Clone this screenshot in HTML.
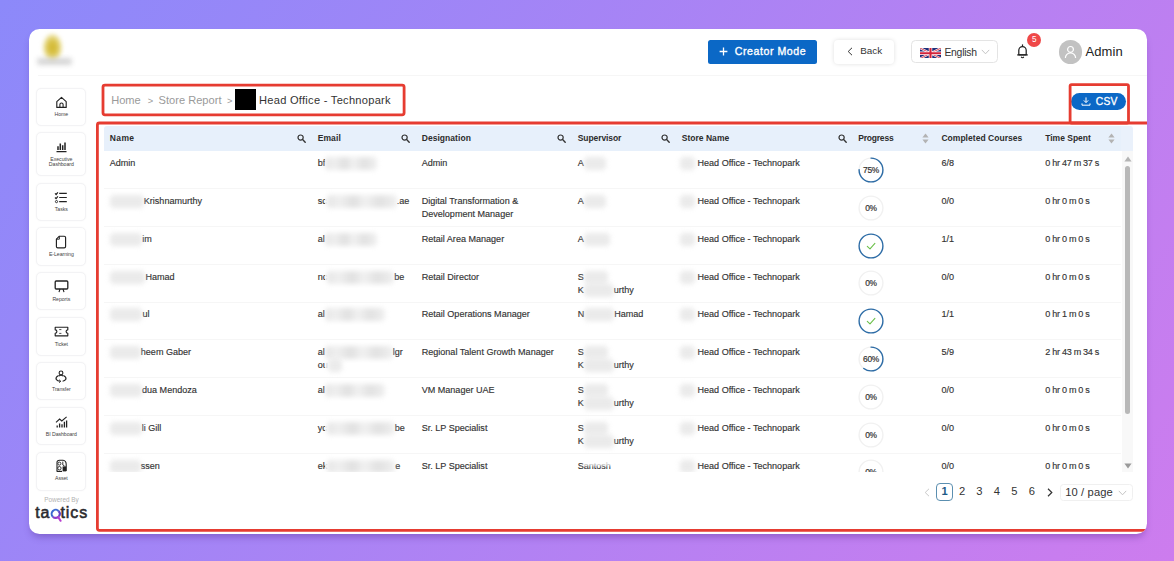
<!DOCTYPE html>
<html lang="en"><head><meta charset="utf-8"><title>Store Report - Head Office - Technopark</title>
<style>
*{box-sizing:border-box;margin:0;padding:0}
html,body{width:1174px;height:561px;overflow:hidden}
body{font-family:"Liberation Sans",Arial,sans-serif;color:#333;background:linear-gradient(125deg,#8c89fa,#cd7cee);position:relative}
.card{position:absolute;left:29.4px;top:28.7px;width:1117.3px;height:504.9px;background:#fff;border-radius:10.5px;box-shadow:0 5px 7px -2px rgba(70,30,130,.35);overflow:hidden}
.abs{position:absolute}
/* everything inside card is positioned in page coords via .pg0 wrapper */
.pg0{position:absolute;left:-29.4px;top:-28.7px;width:1174px;height:561px}
.hline{position:absolute;left:38px;top:74.5px;width:1110px;height:1px;background:#f6f6f6}
.logo{position:absolute;left:43.2px;top:34px;width:19px;height:27px;border-radius:50%;background:radial-gradient(ellipse at center,#d1b52c 0%,#d9c34a 35%,#e9dd92 60%,rgba(245,240,200,0) 85%);filter:blur(1.9px)}
.logot{position:absolute;left:37px;top:57.5px;width:35px;height:7.5px;border-radius:3px;background:#cfcfcf;filter:blur(2.6px);opacity:.85}
.btn-c{position:absolute;left:707.5px;top:40.4px;width:109px;height:23.2px;background:#0b68c6;border-radius:2.5px;color:#fff;font-weight:400;-webkit-text-stroke:.35px #fff;font-size:10.6px;line-height:23.2px;letter-spacing:.55px}
.btn-c span{position:absolute;left:27.3px;top:-.4px;white-space:nowrap}
.btn-c svg{position:absolute;left:11.8px;top:6.7px}
.btn-b{position:absolute;left:834px;top:39.8px;width:59.6px;height:24.2px;background:#fff;border-radius:4px;box-shadow:0 0 4px rgba(0,0,0,.13);font-size:9.9px;line-height:24px;color:#333}
.btn-b span{position:absolute;left:26.2px;top:-.6px}
.btn-b svg{position:absolute;left:12.6px;top:7.4px}
.lang{position:absolute;left:911px;top:40.4px;width:86.5px;height:22.8px;border:1px solid #e4e4e4;border-radius:4.5px;background:#fff;font-size:10.4px;line-height:20.8px;color:#333}
.lang span{position:absolute;left:32.4px;top:1.4px;letter-spacing:-.25px}
.lang .fl{position:absolute;left:7.6px;top:6.4px}
.lang .ch{position:absolute;left:69.2px;top:8px}
.bell{position:absolute;left:1015.6px;top:44.2px}
.badge{position:absolute;left:1027.1px;top:32.6px;width:14.4px;height:14.4px;border-radius:50%;background:#ef4848;color:#fff;font-size:8.2px;line-height:14.4px;text-align:center}
.av{position:absolute;left:1058.8px;top:40.2px;width:23.4px;height:23.4px;border-radius:50%;background:#c2c2c2}
.av svg{position:absolute;left:5.2px;top:4.6px}
.adm{position:absolute;left:1085.6px;top:44px;font-size:13px;line-height:15px;color:#222;letter-spacing:.05px}
.sb{position:absolute;left:36.4px;width:49.9px;background:#fff;border:1px solid #f3f3f5;border-radius:5px;box-shadow:0 0 2px rgba(0,0,0,.04);text-align:center}
.sb .ic{position:absolute;left:0;right:0;top:6px;height:15px;display:flex;align-items:center;justify-content:center}
.sb .lb{position:absolute;left:-10px;right:-10px;top:23.6px;font-size:5.2px;line-height:5.4px;color:#444;letter-spacing:-.05px}
.pw{position:absolute;left:36px;top:496.4px;width:51px;text-align:center;font-size:6.4px;line-height:8px;color:#b2b2b2}
.tq{position:absolute;left:35.2px;top:503.9px;font-weight:400;-webkit-text-stroke:.55px #2a2a2e;font-size:16px;line-height:18px;color:#2a2a2e;letter-spacing:.98px}
.tq .q{color:transparent;-webkit-text-stroke:0 transparent}
.tqs{position:absolute;left:50.4px;top:507.6px}
.red{position:absolute;border:2.7px solid #e8403a;border-radius:3px}
.bc{position:absolute;top:94px;font-size:11.1px;line-height:13px;white-space:nowrap}
.bc.g{color:#9a9a9a}
.blk{position:absolute;left:234.8px;top:89.4px;width:21px;height:20.5px;background:#000}
.csv{position:absolute;left:1071px;top:93.2px;width:55px;height:17px;border-radius:9px;background:#0b68c6;color:#fff;font-weight:400;-webkit-text-stroke:.3px #fff;font-size:10.3px;line-height:17px;letter-spacing:.2px}
.csv span{position:absolute;left:24.8px;top:0}
.csv svg{position:absolute;left:10.4px;top:4px}
.thead{position:absolute;left:104px;top:126.4px;width:1016.5px;height:24.6px;background:#e7f0fb;border-radius:3px 0 0 0}
.sgut{position:absolute;left:1120.5px;top:126.4px;width:12px;height:24.6px;background:#eaf1fb;border-radius:0 3px 0 0}
.th{position:absolute;top:0;height:24.6px;font-weight:700;font-size:8.5px;line-height:24.2px;color:#2c2c2c;white-space:nowrap}
.th span{position:absolute;left:5.7px;top:0}
.th .si{position:absolute;right:5.9px;top:7.4px}
.th .so{position:absolute;right:7.2px;top:6.8px}
.c1{left:0;width:208px}.c2{left:208px;width:104px}.c3{left:312px;width:156px}.c4{left:468px;width:104px}
.c5{left:572px;width:176.5px}.c6{left:748.5px;width:83.2px}.c7{left:831.7px;width:103.8px}.c8{left:935.5px;width:81px}
.td.c8{letter-spacing:-.28px}
.th.c8 .so{right:5.4px}
.tbody{position:absolute;left:104px;top:151px;width:1016.5px;height:320.8px;overflow:hidden}
.tr{position:absolute;left:0;width:1016.5px;height:37.8px;border-bottom:1px solid #f6f6f6}
.td{position:absolute;top:0;padding:5.8px 0 0 5.7px;font-size:9.05px;line-height:13.1px;color:#333;-webkit-text-stroke:.15px #333;white-space:nowrap}
.td span{vertical-align:top}
.bl{display:inline-block;height:13px;background:#dedede;border-radius:4px;filter:blur(2.4px);vertical-align:top;margin-top:0;opacity:.62}
.bt{background:linear-gradient(90deg,#d6d6d6,#e6e6e6 18%,#cecece 38%,#e9e9e9 55%,#d0d0d0 75%,#e6e6e6)}
.cut{position:absolute;left:12.5px;top:6px;width:3.4px;height:11px;background:linear-gradient(90deg,rgba(255,255,255,.9),rgba(255,255,255,.7))}
.td.c6{padding:0}
.pc{position:absolute;left:5.4px;top:5.6px}
.pt{font-family:"Liberation Sans",Arial,sans-serif;font-size:8.4px;fill:#333;font-weight:400;letter-spacing:-.25px;stroke:#333;stroke-width:.2px}
.strack{position:absolute;left:1122.4px;top:151px;width:10.2px;height:321px;background:#f8f8f8}
.sthumb{position:absolute;left:1125.2px;top:166px;width:5.2px;height:248px;background:#b8b8b8;border-radius:3px}
.pgn{position:absolute;top:484px;font-size:11.2px;line-height:16.4px;color:#333}
.pg{position:absolute;top:483.4px;width:17.3px;height:18px;font-size:11.2px;line-height:17.8px;text-align:center;color:#333;border-radius:3px}
.pg.on{border:1px solid #5b8fb0;line-height:15.8px;color:#1d5a86;font-weight:700;border-radius:4px}
.psel{position:absolute;left:1060px;top:484px;width:72.6px;height:17px;border:1px solid #f0f0f0;border-radius:3.5px;font-size:11.2px;line-height:15px}
.psel span{position:absolute;left:4.2px;top:-.2px;white-space:nowrap;letter-spacing:.12px}
.psel svg{position:absolute;left:57.4px;top:5.2px}
</style></head><body>
<div class="card"><div class="pg0">
<div class="logo"></div><div class="logot"></div>
<div class="btn-c"><svg width="9" height="9" viewBox="0 0 9 9"><path d="M4.5 .6 V8.4 M.6 4.5 H8.4" stroke="#fff" stroke-width="1.3"/></svg><span>Creator Mode</span></div>
<div class="btn-b"><svg width="6" height="9" viewBox="0 0 6 9"><path d="M5 .8 L1.2 4.5 L5 8.2" fill="none" stroke="#333" stroke-width="1"/></svg><span>Back</span></div>
<div class="lang"><svg class="fl" width="21" height="10.6" viewBox="0 0 60 30" preserveAspectRatio="none"><rect width="60" height="30" fill="#1f2f7a"/><path d="M0 0 L60 30 M60 0 L0 30" stroke="#fff" stroke-width="6"/><path d="M0 0 L60 30 M60 0 L0 30" stroke="#d3223a" stroke-width="2.4"/><path d="M30 0 V30 M0 15 H60" stroke="#fff" stroke-width="10"/><path d="M30 0 V30 M0 15 H60" stroke="#d3223a" stroke-width="6"/></svg><span>English</span><svg class="ch" width="9" height="6" viewBox="0 0 9 6"><path d="M.8 .9 L4.5 4.8 L8.2 .9" fill="none" stroke="#c4c4c4" stroke-width="1"/></svg></div>
<svg class="bell" width="13" height="15" viewBox="0 0 13 15"><path d="M2.8 10.8 V6.3 a3.7 3.7 0 0 1 7.4 0 V10.8 Z" fill="none" stroke="#222" stroke-width="1.25" stroke-linejoin="round"/><path d="M1.7 10.9 H11.3" stroke="#222" stroke-width="1.25" stroke-linecap="round"/><path d="M5.2 12.8 a1.4 1.4 0 0 0 2.6 0" fill="none" stroke="#222" stroke-width="1.1"/><path d="M6.5 .8 V2.2" stroke="#222" stroke-width="1.2" stroke-linecap="round"/></svg>
<div class="badge">5</div>
<div class="av"><svg width="13" height="14" viewBox="0 0 13 14"><circle cx="6.5" cy="4.4" r="2.9" fill="none" stroke="#fff" stroke-width="1.2"/><path d="M1.4 13 a5.1 5.1 0 0 1 10.2 0" fill="none" stroke="#fff" stroke-width="1.2"/></svg></div>
<div class="adm">Admin</div>
<div class="hline"></div>
<div class="sb" style="top:87.5px;height:38px"><div class="ic"><svg width="13" height="13" viewBox="0 0 13 13"><path d="M1.8 5.6 L6.5 1.4 L11.2 5.6 V11.4 H1.8 Z" fill="none" stroke="#222" stroke-width="1.15" stroke-linejoin="round"/><path d="M4.9 11.4 V8.6 a1.6 1.6 0 0 1 3.2 0 V11.4" fill="none" stroke="#222" stroke-width="1.1"/></svg></div><div class="lb">Home</div></div><div class="sb" style="top:132.2px;height:44.1px"><div class="ic"><svg width="13" height="13" viewBox="0 0 13 13"><path d="M1.5 11.6 H11.5" stroke="#222" stroke-width="1.1"/><path d="M3 10 V6.2 M5.3 10 V3.6 M7.7 10 V5.2 M10 10 V2.4" stroke="#222" stroke-width="1.5"/></svg></div><div class="lb">Executive<br>Dashboard</div></div><div class="sb" style="top:182.5px;height:38.3px"><div class="ic"><svg width="14" height="13" viewBox="0 0 14 13"><path d="M5.2 2.4 H12.8 M5.2 6.5 H12.8 M5.2 10.6 H12.8" stroke="#222" stroke-width="1.2"/><path d="M1 2.4 l1.1 1.1 l1.8 -2.2 M1 6.5 l1.1 1.1 l1.8 -2.2" fill="none" stroke="#222" stroke-width="1.2"/><circle cx="2.5" cy="10.6" r="1.1" fill="none" stroke="#222" stroke-width="0.9"/></svg></div><div class="lb">Tasks</div></div><div class="sb" style="top:227.4px;height:38.2px"><div class="ic"><svg width="12" height="14" viewBox="0 0 12 14"><path d="M4.4 1.2 H9.2 a1.4 1.4 0 0 1 1.4 1.4 V11.4 a1.4 1.4 0 0 1 -1.4 1.4 H2.8 a1.4 1.4 0 0 1 -1.4 -1.4 V4.2 Z" fill="none" stroke="#222" stroke-width="1.15" stroke-linejoin="round"/><path d="M4.4 1.2 V4.2 H1.4" fill="none" stroke="#222" stroke-width="0.9"/></svg></div><div class="lb">E-Learning</div></div><div class="sb" style="top:272.1px;height:38.4px"><div class="ic"><svg width="15" height="13" viewBox="0 0 15 13"><rect x="1.2" y="1" width="12.6" height="8" rx="1" fill="none" stroke="#222" stroke-width="1.3"/><path d="M6 9 L5 12.2 M9 9 L10 12.2" stroke="#222" stroke-width="1.1"/></svg></div><div class="lb">Reports</div></div><div class="sb" style="top:317.2px;height:38.4px"><div class="ic"><svg width="15" height="11" viewBox="0 0 15 11"><path d="M1.2 1.2 H13.8 V3.8 a1.7 1.7 0 0 0 0 3.4 V9.8 H1.2 V7.2 a1.7 1.7 0 0 0 0 -3.4 Z" fill="none" stroke="#222" stroke-width="1.15" stroke-linejoin="round"/><path d="M5.2 3.6 H7.4 M5.2 7.4 H7.4" stroke="#222" stroke-width="0.8"/></svg></div><div class="lb">Ticket</div></div><div class="sb" style="top:362.1px;height:38.4px"><div class="ic"><svg width="14" height="13" viewBox="0 0 14 13"><circle cx="7" cy="2.9" r="1.9" fill="none" stroke="#222" stroke-width="1.1"/><path d="M4.6 5.6 Q1.2 7.4 2.2 9.4 Q3.4 11.2 6.2 11.3 M9.4 5.6 Q12.8 7.4 11.8 9.4 Q10.8 10.9 8.6 11.2" fill="none" stroke="#222" stroke-width="1.1"/><path d="M5.2 9.8 L6.8 11.3 L5.2 12.6" fill="none" stroke="#222" stroke-width="1"/><path d="M4.8 6 Q7 4.6 9.2 6" fill="none" stroke="#222" stroke-width="1.1"/></svg></div><div class="lb">Transfer</div></div><div class="sb" style="top:407px;height:38.3px"><div class="ic"><svg width="13" height="12" viewBox="0 0 13 12"><path d="M1 6.4 L4.6 3 L6.8 5 L11.6 0.9" fill="none" stroke="#222" stroke-width="1.1"/><path d="M2.2 11.4 V9.6 M4.6 11.4 V7.4 M7 11.4 V8.2 M9.4 11.4 V5.8 M11.6 11.4 V4.4" stroke="#222" stroke-width="1.3"/></svg></div><div class="lb">BI Dashboard</div></div><div class="sb" style="top:451.9px;height:38.9px"><div class="ic"><svg width="13" height="14" viewBox="0 0 13 14"><path d="M2 12 V3.4 Q2 1.2 4.6 1.2 H8 Q11.2 1.6 11.2 5.4 V12" fill="none" stroke="#222" stroke-width="1.1"/><circle cx="4.4" cy="4.6" r="1.5" fill="none" stroke="#222" stroke-width="0.9"/><circle cx="4.4" cy="9.2" r="1.7" fill="none" stroke="#222" stroke-width="0.9"/><rect x="7.6" y="7.4" width="3.6" height="5" fill="#222"/><path d="M7.8 2.6 V6 L9.6 7" fill="none" stroke="#222" stroke-width="0.9"/><path d="M1.6 12.4 H7" stroke="#222" stroke-width="1.2"/></svg></div><div class="lb">Asset</div></div>
<div class="pw">Powered By</div>
<div class="tq">ta<span class="q">q</span>tics</div>
<svg class="tqs" width="13.2" height="14.3" viewBox="0 0 12 13" fill="none" stroke-width="1.9"><path d="M2.58 7.92 A3.7 3.7 0 0 1 7.82 2.68" stroke="#3a68cf"/><path d="M7.82 2.68 A3.7 3.7 0 0 1 8.1 7.6" stroke="#6244c6"/><path d="M8.1 7.6 A3.7 3.7 0 0 1 2.58 7.92" stroke="#8a3fca"/><path d="M7.6 8.4 L9.6 11.6" stroke="#b83ccf" stroke-linecap="round"/></svg>

<div class="bc g" style="left:111.2px">Home</div><div class="bc g" style="left:147.8px;font-size:9.4px;top:94.3px">&gt;</div><div class="bc g" style="left:158.6px">Store Report</div><div class="bc g" style="left:226.9px;font-size:9.4px;top:94.3px">&gt;</div>
<div class="blk"></div>
<div class="bc" style="left:259px;color:#333;letter-spacing:.27px">Head Office - Technopark</div>

<div class="csv"><svg width="10" height="9" viewBox="0 0 10 9"><path d="M5 .4 V5.4 M2.8 3.4 L5 5.6 L7.2 3.4" fill="none" stroke="#fff" stroke-width="1"/><path d="M1 6.4 V8.2 H9 V6.4" fill="none" stroke="#fff" stroke-width="1"/></svg><span>CSV</span></div>

<div class="thead"><div class="th c1"><span style="letter-spacing:0.42px">Name</span><svg class="si" width="9" height="9" viewBox="0 0 9 9"><circle cx="3.6" cy="3.6" r="2.6" fill="none" stroke="#333" stroke-width="1.2"/><path d="M5.6 5.6 L8.2 8.2" stroke="#333" stroke-width="1.4" stroke-linecap="round"/></svg></div><div class="th c2"><span style="letter-spacing:0.1px">Email</span><svg class="si" width="9" height="9" viewBox="0 0 9 9"><circle cx="3.6" cy="3.6" r="2.6" fill="none" stroke="#333" stroke-width="1.2"/><path d="M5.6 5.6 L8.2 8.2" stroke="#333" stroke-width="1.4" stroke-linecap="round"/></svg></div><div class="th c3"><span style="letter-spacing:0.05px">Designation</span><svg class="si" width="9" height="9" viewBox="0 0 9 9"><circle cx="3.6" cy="3.6" r="2.6" fill="none" stroke="#333" stroke-width="1.2"/><path d="M5.6 5.6 L8.2 8.2" stroke="#333" stroke-width="1.4" stroke-linecap="round"/></svg></div><div class="th c4"><span style="letter-spacing:-0.08px">Supervisor</span><svg class="si" width="9" height="9" viewBox="0 0 9 9"><circle cx="3.6" cy="3.6" r="2.6" fill="none" stroke="#333" stroke-width="1.2"/><path d="M5.6 5.6 L8.2 8.2" stroke="#333" stroke-width="1.4" stroke-linecap="round"/></svg></div><div class="th c5"><span style="letter-spacing:0.03px">Store Name</span><svg class="si" width="9" height="9" viewBox="0 0 9 9"><circle cx="3.6" cy="3.6" r="2.6" fill="none" stroke="#333" stroke-width="1.2"/><path d="M5.6 5.6 L8.2 8.2" stroke="#333" stroke-width="1.4" stroke-linecap="round"/></svg></div><div class="th c6"><span style="letter-spacing:-0.2px">Progress</span><svg class="so" width="7" height="11" viewBox="0 0 7 11"><path d="M3.5 0.6 L6.6 4.4 H0.4 Z" fill="#b3b3b3"/><path d="M3.5 10.4 L6.6 6.6 H0.4 Z" fill="#b3b3b3"/></svg></div><div class="th c7"><span style="letter-spacing:0.04px">Completed Courses</span></div><div class="th c8"><span style="letter-spacing:0px">Time Spent</span><svg class="so" width="7" height="11" viewBox="0 0 7 11"><path d="M3.5 0.6 L6.6 4.4 H0.4 Z" fill="#b3b3b3"/><path d="M3.5 10.4 L6.6 6.6 H0.4 Z" fill="#b3b3b3"/></svg></div></div><div class="sgut"></div>
<div class="tbody">
<div class="tr" style="top:0.5px">
<div class="td c1"><span>Admin</span></div><div class="td c2"><span>bf</span><i class="cut"></i><i class="bl bt" style="width:52px"></i><span></span></div><div class="td c3">Admin</div><div class="td c4"><span>A</span><i class="bl" style="width:22px"></i><span></span></div>
<div class="td c5"><i class="bl" style="width:15px;margin-left:-1.8px;margin-right:2.6px"></i><span>Head Office - Technopark</span></div>
<div class="td c6"><svg class="pc" width="26" height="26" viewBox="0 0 26 26"><circle cx="13" cy="13" r="11.9" fill="none" stroke="#f1f1f1" stroke-width="1.4"/><circle cx="13" cy="13" r="11.9" fill="none" stroke="#2d6ca6" stroke-width="1.4" stroke-linecap="round" stroke-dasharray="56.08 74.77" transform="rotate(-90 13 13)"/><text x="13" y="15.9" text-anchor="middle" class="pt">75%</text></svg></div><div class="td c7">6/8</div><div class="td c8">0 hr 47 m 37 s</div></div>
<div class="tr" style="top:38.3px">
<div class="td c1"><i class="bl" style="width:34.1px"></i><span>Krishnamurthy</span></div><div class="td c2"><span>sc</span><i class="cut"></i><i class="bl bt" style="width:70px"></i><span>.ae</span></div><div class="td c3">Digital Transformation &amp;<br>Development Manager</div><div class="td c4"><span>A</span><i class="bl" style="width:22px"></i><span></span></div>
<div class="td c5"><i class="bl" style="width:15px;margin-left:-1.8px;margin-right:2.6px"></i><span>Head Office - Technopark</span></div>
<div class="td c6"><svg class="pc" width="26" height="26" viewBox="0 0 26 26"><circle cx="13" cy="13" r="11.9" fill="none" stroke="#f1f1f1" stroke-width="1.4"/><text x="13" y="15.9" text-anchor="middle" class="pt">0%</text></svg></div><div class="td c7">0/0</div><div class="td c8">0 hr 0 m 0 s</div></div>
<div class="tr" style="top:76.1px">
<div class="td c1"><i class="bl" style="width:32.5px"></i><span>im</span></div><div class="td c2"><span>al</span><i class="cut"></i><i class="bl bt" style="width:52px"></i><span></span></div><div class="td c3">Retail Area Manager</div><div class="td c4"><span>A</span><i class="bl" style="width:26px"></i><span></span></div>
<div class="td c5"><i class="bl" style="width:15px;margin-left:-1.8px;margin-right:2.6px"></i><span>Head Office - Technopark</span></div>
<div class="td c6"><svg class="pc" width="26" height="26" viewBox="0 0 26 26"><circle cx="13" cy="13" r="11.9" fill="none" stroke="#2d6ca6" stroke-width="1.4"/><path d="M9.3 13.3 L12 15.9 L16.9 10.4" fill="none" stroke="#6cc04a" stroke-width="1.1" stroke-linecap="round" stroke-linejoin="round"/></svg></div><div class="td c7">1/1</div><div class="td c8">0 hr 0 m 0 s</div></div>
<div class="tr" style="top:113.9px">
<div class="td c1"><i class="bl" style="width:35.7px"></i><span>Hamad</span></div><div class="td c2"><span>nc</span><i class="cut"></i><i class="bl bt" style="width:67px"></i><span>be</span></div><div class="td c3">Retail Director</div><div class="td c4"><span>S</span><i class="bl" style="width:24px"></i><span></span><br><span>K</span><i class="bl" style="width:30px"></i><span>urthy</span></div>
<div class="td c5"><i class="bl" style="width:15px;margin-left:-1.8px;margin-right:2.6px"></i><span>Head Office - Technopark</span></div>
<div class="td c6"><svg class="pc" width="26" height="26" viewBox="0 0 26 26"><circle cx="13" cy="13" r="11.9" fill="none" stroke="#f1f1f1" stroke-width="1.4"/><text x="13" y="15.9" text-anchor="middle" class="pt">0%</text></svg></div><div class="td c7">0/0</div><div class="td c8">0 hr 0 m 0 s</div></div>
<div class="tr" style="top:151.7px">
<div class="td c1"><i class="bl" style="width:32.8px"></i><span>ul</span></div><div class="td c2"><span>al</span><i class="cut"></i><i class="bl bt" style="width:60px"></i><span></span></div><div class="td c3">Retail Operations Manager</div><div class="td c4"><span>N</span><i class="bl" style="width:30px"></i><span>Hamad</span></div>
<div class="td c5"><i class="bl" style="width:15px;margin-left:-1.8px;margin-right:2.6px"></i><span>Head Office - Technopark</span></div>
<div class="td c6"><svg class="pc" width="26" height="26" viewBox="0 0 26 26"><circle cx="13" cy="13" r="11.9" fill="none" stroke="#2d6ca6" stroke-width="1.4"/><path d="M9.3 13.3 L12 15.9 L16.9 10.4" fill="none" stroke="#6cc04a" stroke-width="1.1" stroke-linecap="round" stroke-linejoin="round"/></svg></div><div class="td c7">1/1</div><div class="td c8">0 hr 1 m 0 s</div></div>
<div class="tr" style="top:189.5px">
<div class="td c1"><i class="bl" style="width:31.1px"></i><span>heem Gaber</span></div><div class="td c2"><span>al</span><i class="cut"></i><i class="bl bt" style="width:68px"></i><span>lgr</span><br><span>ou</span><i class="cut" style="top:19px"></i><i class="bl" style="width:14px"></i></div><div class="td c3">Regional Talent Growth Manager</div><div class="td c4"><span>S</span><i class="bl" style="width:24px"></i><span></span><br><span>K</span><i class="bl" style="width:30px"></i><span>urthy</span></div>
<div class="td c5"><i class="bl" style="width:15px;margin-left:-1.8px;margin-right:2.6px"></i><span>Head Office - Technopark</span></div>
<div class="td c6"><svg class="pc" width="26" height="26" viewBox="0 0 26 26"><circle cx="13" cy="13" r="11.9" fill="none" stroke="#f1f1f1" stroke-width="1.4"/><circle cx="13" cy="13" r="11.9" fill="none" stroke="#2d6ca6" stroke-width="1.4" stroke-linecap="round" stroke-dasharray="44.86 74.77" transform="rotate(-90 13 13)"/><text x="13" y="15.9" text-anchor="middle" class="pt">60%</text></svg></div><div class="td c7">5/9</div><div class="td c8">2 hr 43 m 34 s</div></div>
<div class="tr" style="top:227.3px">
<div class="td c1"><i class="bl" style="width:32.3px"></i><span>dua Mendoza</span></div><div class="td c2"><span>al</span><i class="cut"></i><i class="bl bt" style="width:60px"></i><span></span></div><div class="td c3">VM Manager UAE</div><div class="td c4"><span>S</span><i class="bl" style="width:24px"></i><span></span><br><span>K</span><i class="bl" style="width:30px"></i><span>urthy</span></div>
<div class="td c5"><i class="bl" style="width:15px;margin-left:-1.8px;margin-right:2.6px"></i><span>Head Office - Technopark</span></div>
<div class="td c6"><svg class="pc" width="26" height="26" viewBox="0 0 26 26"><circle cx="13" cy="13" r="11.9" fill="none" stroke="#f1f1f1" stroke-width="1.4"/><text x="13" y="15.9" text-anchor="middle" class="pt">0%</text></svg></div><div class="td c7">0/0</div><div class="td c8">0 hr 0 m 0 s</div></div>
<div class="tr" style="top:265.1px">
<div class="td c1"><i class="bl" style="width:32px"></i><span>li Gill</span></div><div class="td c2"><span>yc</span><i class="cut"></i><i class="bl bt" style="width:68px"></i><span>be</span></div><div class="td c3">Sr. LP Specialist</div><div class="td c4"><span>S</span><i class="bl" style="width:24px"></i><span></span><br><span>K</span><i class="bl" style="width:30px"></i><span>urthy</span></div>
<div class="td c5"><i class="bl" style="width:15px;margin-left:-1.8px;margin-right:2.6px"></i><span>Head Office - Technopark</span></div>
<div class="td c6"><svg class="pc" width="26" height="26" viewBox="0 0 26 26"><circle cx="13" cy="13" r="11.9" fill="none" stroke="#f1f1f1" stroke-width="1.4"/><text x="13" y="15.9" text-anchor="middle" class="pt">0%</text></svg></div><div class="td c7">0/0</div><div class="td c8">0 hr 0 m 0 s</div></div>
<div class="tr" style="top:302.9px">
<div class="td c1"><i class="bl" style="width:31px"></i><span>ssen</span></div><div class="td c2"><span>ek</span><i class="cut"></i><i class="bl bt" style="width:68px"></i><span>e</span></div><div class="td c3">Sr. LP Specialist</div><div class="td c4"><span>Santosh</span><span></span></div>
<div class="td c5"><i class="bl" style="width:15px;margin-left:-1.8px;margin-right:2.6px"></i><span>Head Office - Technopark</span></div>
<div class="td c6"><svg class="pc" width="26" height="26" viewBox="0 0 26 26"><circle cx="13" cy="13" r="11.9" fill="none" stroke="#f1f1f1" stroke-width="1.4"/><text x="13" y="15.9" text-anchor="middle" class="pt">0%</text></svg></div><div class="td c7">0/0</div><div class="td c8">0 hr 0 m 0 s</div></div>
<div class="abs" style="left:479px;top:305.5px;width:33px;height:9.6px;background:rgba(255,255,255,.78);filter:blur(.9px)"></div>
</div>
<div class="strack"></div><div class="sthumb"></div>
<svg class="abs" style="left:1123.6px;top:155.6px" width="8" height="6" viewBox="0 0 8 6"><path d="M4 .6 L7.6 5.4 H.4 Z" fill="#b4b4b4"/></svg>
<svg class="abs" style="left:1123.8px;top:463.4px" width="8" height="6" viewBox="0 0 8 6"><path d="M4 5.4 L7.6 .6 H.4 Z" fill="#9a9a9a"/></svg>
<svg class="abs" style="left:924px;top:487.6px" width="6" height="9" viewBox="0 0 6 9"><path d="M5 .8 L1.2 4.5 L5 8.2" fill="none" stroke="#c8c8c8" stroke-width="1"/></svg>
<span class="pg on" style="left:936.0px">1</span><span class="pg" style="left:953.4px">2</span><span class="pg" style="left:970.8px">3</span><span class="pg" style="left:988.3px">4</span><span class="pg" style="left:1005.7px">5</span><span class="pg" style="left:1023.1px">6</span>
<svg class="abs" style="left:1046.6px;top:487.6px" width="6" height="9" viewBox="0 0 6 9"><path d="M1 .8 L4.8 4.5 L1 8.2" fill="none" stroke="#333" stroke-width="1.2"/></svg>
<div class="psel"><span>10 / page</span><svg width="9" height="6" viewBox="0 0 9 6"><path d="M.8 .9 L4.5 4.8 L8.2 .9" fill="none" stroke="#c4c4c4" stroke-width="1"/></svg></div>
<svg class="abs" style="left:0;top:0;pointer-events:none" width="1174" height="561" viewBox="0 0 1174 561" fill="none" stroke="#e63c31" stroke-width="2.8"><rect x="103" y="85.1" width="301.1" height="29.7" rx="2"/><rect x="1070.1" y="84.6" width="58.4" height="38.4" rx="1.5"/><rect x="97.4" y="123" width="1100" height="407.3" rx="2"/></svg>
</div></div>
</body></html>
